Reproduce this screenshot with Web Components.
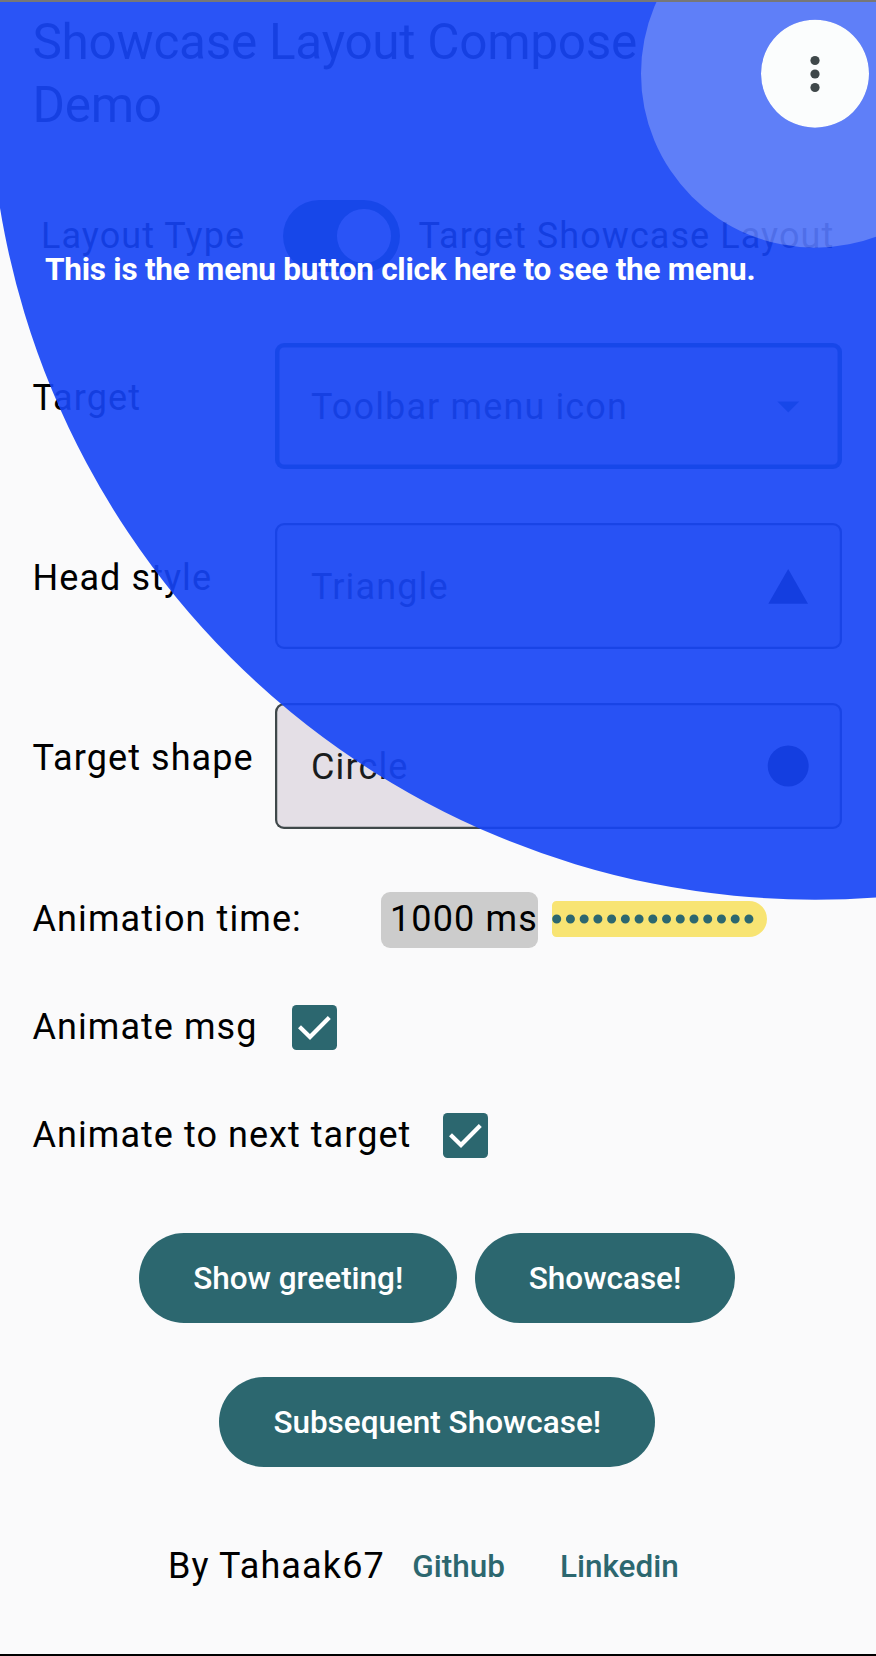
<!DOCTYPE html>
<html lang="en">
<head>
<meta charset="utf-8">
<title>Showcase Layout Compose Demo</title>
<style>
html,body{margin:0;padding:0}
body{width:876px;height:1656px;overflow:hidden;background:#fafafb;font-family:Roboto,sans-serif;color:#000}
</style>
</head>
<body>
<demo-screen></demo-screen>
<script>
const define = (name, html, setup) => customElements.define(name, class extends HTMLElement {
  constructor() {
    super();
    const t = document.createElement('template');
    t.innerHTML = html;
    this.attachShadow({ mode: 'open' }).append(t.content.cloneNode(true));
  }
  connectedCallback() { if (setup) setup(this, this.shadowRoot); }
});

define('top-title', `
<style>
:host{display:block;font-size:49.5px;line-height:63px;letter-spacing:-.28px;color:#191c1d;width:640px;height:126px}
</style><slot></slot>`);

define('md-switch', `
<style>
:host{display:flex;box-sizing:border-box;width:117px;height:72px;border-radius:36px;background:#2c676f;padding:9px;justify-content:flex-end}
i{width:54px;height:54px;border-radius:50%;background:#fff}
</style><i></i>`);

define('select-row', `
<style>
:host{display:flex;align-items:center;height:126px;font-size:36px;line-height:54px;letter-spacing:1.125px;white-space:nowrap}
.label{width:242px;padding-bottom:16px;box-sizing:border-box;letter-spacing:1.08px}
.value{padding-top:1px}
.field{display:flex;align-items:center;justify-content:space-between;box-sizing:border-box;width:567px;height:126px;border-radius:9px;background:#e4dfe6;box-shadow:inset 0 0 0 2.25px #3f484a;padding:0 27px 0 36.500px;color:#191c1d}
:host([focused]) .field{box-shadow:inset 0 0 0 4.5px #2c676f}
::slotted(svg){display:block;width:54px;height:54px}
</style><span class="label"></span><div class="field"><span class="value"></span><slot></slot></div>`,
(el, root) => {
  root.querySelector('.label').textContent = el.getAttribute('label');
  root.querySelector('.value').textContent = el.getAttribute('value');
});

define('time-row', `
<style>
:host{display:flex;align-items:center;height:56px;font-size:36px;line-height:54px;letter-spacing:1.125px;white-space:nowrap}
.label{width:348px;padding-bottom:2px;letter-spacing:1.09px}
.value{box-sizing:border-box;width:157px;height:56px;border-radius:9px;background:#ccc;padding-left:9.500px;line-height:55px;margin-right:14px}
svg{display:block;width:215px;height:36px;margin-bottom:2px}
</style><span class="label">Animation time:</span><span class="value">1000 ms</span>
<svg viewBox="0 0 215 36"><path d="M4.5 0H197a18 18 0 0 1 0 36H4.5A4.5 4.5 0 0 1 0 31.500V4.500A4.500 4.500 0 0 1 4.500 0Z" fill="#f8e473"/><path d="M4.700 18H200" fill="none" stroke="#2c676f" stroke-width="9" stroke-linecap="round" stroke-dasharray="0 13.730"/></svg>`);

define('check-row', `
<style>
:host{display:flex;align-items:center;gap:33px;height:54px;font-size:36px;line-height:54px;letter-spacing:1.05px;white-space:nowrap}
:host(:first-child){gap:34.500px}
svg{display:block;width:45px;height:45px;margin-top:1px}
:host(:last-child) svg{margin-left:-1px}
</style><span><slot></slot></span>
<svg viewBox="0 0 45 45"><rect width="45" height="45" rx="4.500" fill="#2c676f"/><path d="M7.500 21.700L18 32L37.300 12.500" fill="none" stroke="#fff" stroke-width="4.200"/></svg>`);

define('md-button', `
<style>
:host{display:flex;align-items:center;justify-content:center;box-sizing:border-box;height:90px;padding:1px 54px 0;border-radius:45px;background:#2c676f;color:#fff;font-size:31.500px;font-weight:500;letter-spacing:-.02px;line-height:45px;white-space:nowrap}
:host([text]){background:none;color:#2c676f;padding:1px 27.500px 0}
</style><slot></slot>`);

define('showcase-overlay', `
<style>
:host{position:absolute;inset:0;overflow:hidden}
svg{position:absolute;left:0;top:0}
p{position:absolute;left:45px;top:246.500px;margin:0;font-size:31.500px;line-height:45px;font-weight:700;letter-spacing:-.24px;color:#fff;white-space:nowrap}
</style>
<svg width="876" height="1656" viewBox="0 0 876 1656">
<path fill="#1644f5" fill-opacity=".915" fill-rule="evenodd" d="M-11 73.700a826 826 0 0 1 1652 0a826 826 0 0 1 -1652 0ZM761 73.700a54 54 0 0 0 108 0a54 54 0 0 0 -108 0Z"/>
<path fill="#fff" fill-opacity=".25" fill-rule="evenodd" d="M641 73.700a174 174 0 0 1 348 0a174 174 0 0 1 -348 0ZM761 73.700a54 54 0 0 0 108 0a54 54 0 0 0 -108 0Z"/>
</svg>
<p><slot></slot></p>`);

define('demo-screen', `
<style>
:host{display:block;position:relative;box-sizing:border-box;width:876px;height:1656px;overflow:hidden;background:#fafafb;border-top:2px solid #777;border-bottom:2px solid #000}
main{display:flex;flex-direction:column;padding:9px 0 0 32.500px}
.type{display:flex;align-items:center;height:72px;margin-top:63px;padding-left:8.500px;font-size:36px;line-height:54px;letter-spacing:1.06px;white-space:nowrap}
.type .name{width:241.500px;margin-top:-1px}
.type .mode{margin:-1px 0 0 19px}
select-row{margin-bottom:54px}
.selects{margin-top:71px}
time-row{margin-top:9px}
.checks{display:flex;flex-direction:column;gap:54px;margin-top:51.500px}
.actions{display:flex;flex-wrap:wrap;justify-content:center;gap:54px 17.500px;margin:71px 34px 0 0}
footer{display:flex;align-items:center;height:90px;margin-top:54.500px;padding-left:135.500px;font-size:36px;letter-spacing:1.125px;line-height:54px;white-space:nowrap}
.over{position:absolute;inset:-2px 0 -2px;clip-path:inset(2px 0 2px 0)}
header{display:flex;justify-content:space-between}
.menu{display:block;width:108px;height:108px;border-radius:50%;background:#fbfdfd;margin:9px 7px 0 0}
</style>
<main>
<header><top-title>Showcase Layout Compose Demo</top-title>
<svg class="menu" viewBox="0 0 108 108"><g fill="#3f484a"><circle cx="54" cy="40.500" r="4.600"/><circle cx="54" cy="54" r="4.600"/><circle cx="54" cy="67.500" r="4.600"/></g></svg></header>
<div class="type"><span class="name">Layout Type</span><md-switch></md-switch><span class="mode">Target Showcase Layout</span></div>
<div class="selects">
<select-row focused label="Target" value="Toolbar menu icon"><svg viewBox="0 0 54 54"><path d="M16.300 22.500H38.300L27.300 33.500Z" fill="#2c676f"/></svg></select-row>
<select-row label="Head style" value="Triangle"><svg viewBox="0 0 54 54"><path d="M27.200 10L47 44.700H7.300Z"/></svg></select-row>
<select-row label="Target shape" value="Circle"><svg viewBox="0 0 54 54"><circle cx="27.200" cy="27" r="20.500"/></svg></select-row>
</div>
<time-row></time-row>
<div class="checks"><check-row>Animate msg</check-row><check-row>Animate to next target</check-row></div>
<div class="actions"><md-button>Show greeting!</md-button><md-button>Showcase!</md-button><md-button>Subsequent Showcase!</md-button></div>
<footer><span>By Tahaak67</span><md-button text>Github</md-button><md-button text>Linkedin</md-button></footer>
</main>
<div class="over"><showcase-overlay>This is the menu button click here to see the menu.</showcase-overlay></div>`);
</script>
</body>
</html>
